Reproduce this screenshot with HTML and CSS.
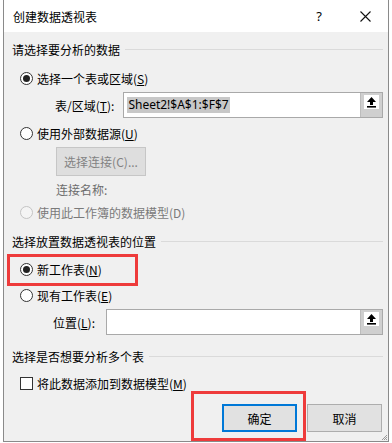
FILE: index.html
```html
<!DOCTYPE html>
<html lang="zh-CN">
<head>
    <meta charset="UTF-8">
    <title>创建数据透视表</title>
    <link rel="stylesheet" href="styles.css">
</head>
<body>
<div class="dialog">
    <div class="titlebar">
        <span class="title">创建数据透视表</span>
        <span class="help">?</span>
        <svg class="close" width="11" height="11" viewBox="0 0 11 11"><path d="M0.5 0.5 L10.5 10.5 M10.5 0.5 L0.5 10.5" stroke="#111" stroke-width="1.1" fill="none"/></svg>
    </div>
    <div class="content">
        <div class="group g1"><span>请选择要分析的数据</span></div>

        <div class="opt r-table"><span class="radio on"></span><span>选择一个表或区域(<u>S</u>)</span></div>

        <div class="field f-range">
            <label class="lbl-range">表/区域(<u>T</u>):</label>
            <div class="ref">
                <span class="val"><span class="sel">Sheet2!$A$1:$F$7</span></span>
                <span class="pick">
                    <svg width="15" height="14" viewBox="0 0 15 14"><path d="M7.5 2 L3 7 L6 7 L6 10 L9 10 L9 7 L12 7 Z" fill="#000"/><rect x="3" y="11" width="9" height="1.6" fill="#000"/></svg>
                </span>
            </div>
        </div>

        <div class="opt r-ext"><span class="radio"></span><span>使用外部数据源(<u>U</u>)</span></div>

        <div class="indent b-conn"><button class="btn-off" type="button">选择连接(C)...</button></div>

        <div class="indent conn-name">连接名称:</div>

        <div class="opt r-model off"><span class="radio dis"></span><span>使用此工作簿的数据模型(D)</span></div>

        <div class="group g2"><span>选择放置数据透视表的位置</span></div>

        <div class="opt r-new"><span class="radio on"></span><span>新工作表(<u>N</u>)</span><span class="mark mark-new"></span></div>

        <div class="opt r-exist"><span class="radio"></span><span>现有工作表(<u>E</u>)</span></div>

        <div class="field f-pos">
            <label class="lbl-pos">位置(<u>L</u>):</label>
            <div class="ref">
                <span class="val blank"></span>
                <span class="pick">
                    <svg width="15" height="14" viewBox="0 0 15 14"><path d="M7.5 2 L3 7 L6 7 L6 10 L9 10 L9 7 L12 7 Z" fill="#000"/><rect x="3" y="11" width="9" height="1.6" fill="#000"/></svg>
                </span>
            </div>
        </div>

        <div class="group g3"><span>选择是否想要分析多个表</span></div>

        <div class="opt c-model"><span class="check"></span><span>将此数据添加到数据模型(<u>M</u>)</span></div>

        <div class="actions">
            <span class="mark mark-ok"></span>
            <button class="btn default" type="button">确定</button>
            <button class="btn" type="button">取消</button>
        </div>

        <svg class="grip" width="6" height="6" viewBox="0 0 6 6"><path d="M5 0 L0 5 M5 2 L2 5 M5 4 L4 5" stroke="#999" stroke-width="1"/></svg>
    </div>
</div>
</body>
</html>
```

FILE: styles.css
```css
*{
    margin: 0;
    box-sizing: border-box;
}
body
{
    margin: 0;
    background: #ffffff;
    font-family: "Noto Sans CJK SC", "Noto Sans", sans-serif;
    font-size: 12px;
    color: #000;
}
.dialog
{
    margin-left: 3px;
    width: 386px;
    height: 442px;
    border-left: 1px solid #8a8a8a;
    border-right: 1px solid #8a8a8a;
    border-bottom: 1px solid #8a8a8a;
    display: flex;
    flex-direction: column;
}
.titlebar
{
    height: 32px;
    background: #fff;
    display: flex;
    align-items: center;
    padding-left: 9px;
}
.title
{
    flex: 1;
    font-size: 12px;
}
.help
{
    font-size: 13px;
    margin-right: 38px;
    font-family: "Noto Sans", sans-serif;
}
.close
{
    margin-right: 17px;
}
.content
{
    flex: 1;
    background: #f0f0f0;
    padding: 8px 5px 0 0;
    display: flex;
    flex-direction: column;
    position: relative;
}
.group
{
    height: 18px;
    display: flex;
    align-items: center;
    padding-left: 8px;
}
.group::after
{
    content: "";
    flex: 1;
    height: 1px;
    background: #dadada;
    margin-left: 5px;
}
.opt
{
    height: 20px;
    display: flex;
    align-items: center;
    gap: 4px;
    padding-left: 16px;
    position: relative;
}
.radio
{
    width: 13px;
    height: 13px;
    border: 1px solid #333;
    border-radius: 50%;
    background: #fff;
    display: flex;
    align-items: center;
    justify-content: center;
}
.radio.on::after
{
    content: "";
    width: 7px;
    height: 7px;
    border-radius: 50%;
    background: #222;
}
.radio.dis
{
    border-color: #c4c4c4;
    background: #f4f4f4;
}
.off
{
    color: #7a7a7a;
}
.check
{
    width: 13px;
    height: 13px;
    border: 1px solid #333;
    background: #fff;
}
.field
{
    height: 26px;
    display: flex;
    align-items: center;
}
.ref
{
    flex: 1;
    height: 26px;
    border: 1px solid #a9a9a9;
    background: #fff;
    display: flex;
}
.val
{
    flex: 1;
    display: flex;
    align-items: center;
    padding-left: 3px;
}
.sel
{
    background: #c8c8c8;
    line-height: 16px;
    padding: 0 1px;
    font-family: "Noto Sans", sans-serif;
}
.val.blank
{
    margin: 2px;
}
.pick
{
    width: 22px;
    background: #cfcfcf;
    border-left: 1px solid #bdbdbd;
    display: flex;
    justify-content: center;
    padding-top: 2px;
}
.pick svg
{
    background: #fff;
}
.f-range
{
    margin-top: 4px;
}
.lbl-range
{
    margin-left: 51px;
    margin-right: 9px;
}
.lbl-pos
{
    margin-left: 49px;
    width: 53px;
}
.r-table
{
    margin-top: 10px;
}
.r-ext
{
    margin-top: 5px;
}
.indent
{
    padding-left: 52px;
}
.b-conn
{
    margin-top: 4px;
}
.btn-off
{
    width: 90px;
    height: 29px;
    font: inherit;
    color: #838383;
    background: #dedede;
    border: 1px solid #c6c6c6;
}
.conn-name
{
    margin-top: 5px;
    height: 18px;
    line-height: 18px;
    color: #6d6d6d;
}
.r-model
{
    margin-top: 3px;
}
.g2
{
    margin-top: 10px;
}
.r-new
{
    margin-top: 9px;
}
.r-exist
{
    margin-top: 6px;
}
.f-pos
{
    margin-top: 4px;
}
.g3
{
    margin-top: 12px;
}
.c-model
{
    margin-top: 8px;
}
.actions
{
    margin-top: 11px;
    display: flex;
    justify-content: flex-end;
    gap: 10px;
    padding-right: 1px;
    position: relative;
}
.btn
{
    width: 75px;
    height: 28px;
    font: inherit;
    background: #e1e1e1;
    border: 1px solid #adadad;
}
.btn.default
{
    border: 2px solid #0078d7;
}
.mark
{
    position: absolute;
    border: 3px solid #ee3b3b;
}
.mark-new
{
    left: 3px;
    top: -5px;
    width: 131px;
    height: 32px;
}
.mark-ok
{
    left: 187px;
    top: -13px;
    width: 115px;
    height: 50px;
}
.grip
{
    position: absolute;
    right: 0;
    bottom: 0;
}
```
